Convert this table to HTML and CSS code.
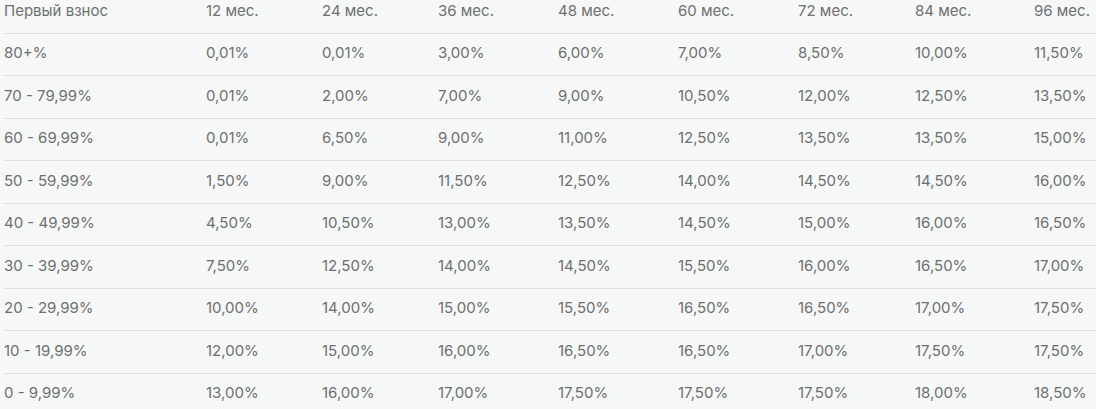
FILE: index.html
```html
<!DOCTYPE html>
<html lang="ru">
<head>
<meta charset="utf-8">
<link rel="stylesheet" href="styles.css">
</head>
<body>
<table class="rates">
  <colgroup>
    <col class="c0"><col class="c1"><col class="c2"><col class="c3"><col class="c4"><col class="c5"><col class="c6"><col class="c7"><col class="c8">
  </colgroup>
  <thead>
    <tr><th>Первый взнос</th><th>12 мес.</th><th>24 мес.</th><th>36 мес.</th><th>48 мес.</th><th>60 мес.</th><th>72 мес.</th><th>84 мес.</th><th>96 мес.</th></tr>
  </thead>
  <tbody>
    <tr><td>80+%</td><td>0,01%</td><td>0,01%</td><td>3,00%</td><td>6,00%</td><td>7,00%</td><td>8,50%</td><td>10,00%</td><td>11,50%</td></tr>
    <tr><td>70 - 79,99%</td><td>0,01%</td><td>2,00%</td><td>7,00%</td><td>9,00%</td><td>10,50%</td><td>12,00%</td><td>12,50%</td><td>13,50%</td></tr>
    <tr><td>60 - 69,99%</td><td>0,01%</td><td>6,50%</td><td>9,00%</td><td>11,00%</td><td>12,50%</td><td>13,50%</td><td>13,50%</td><td>15,00%</td></tr>
    <tr><td>50 - 59,99%</td><td>1,50%</td><td>9,00%</td><td>11,50%</td><td>12,50%</td><td>14,00%</td><td>14,50%</td><td>14,50%</td><td>16,00%</td></tr>
    <tr><td>40 - 49,99%</td><td>4,50%</td><td>10,50%</td><td>13,00%</td><td>13,50%</td><td>14,50%</td><td>15,00%</td><td>16,00%</td><td>16,50%</td></tr>
    <tr><td>30 - 39,99%</td><td>7,50%</td><td>12,50%</td><td>14,00%</td><td>14,50%</td><td>15,50%</td><td>16,00%</td><td>16,50%</td><td>17,00%</td></tr>
    <tr><td>20 - 29,99%</td><td>10,00%</td><td>14,00%</td><td>15,00%</td><td>15,50%</td><td>16,50%</td><td>16,50%</td><td>17,00%</td><td>17,50%</td></tr>
    <tr><td>10 - 19,99%</td><td>12,00%</td><td>15,00%</td><td>16,00%</td><td>16,50%</td><td>16,50%</td><td>17,00%</td><td>17,50%</td><td>17,50%</td></tr>
    <tr><td>0 - 9,99%</td><td>13,00%</td><td>16,00%</td><td>17,00%</td><td>17,50%</td><td>17,50%</td><td>17,50%</td><td>18,00%</td><td>18,50%</td></tr>
  </tbody>
</table>
</body>
</html>
```
FILE: styles.css
```css
html, body {
  margin: 0;
  padding: 0;
  background: #f6f7f7;
}
body {
  padding-left: 4px;
  overflow: hidden;
}
.rates {
  border-collapse: collapse;
  table-layout: fixed;
  width: 1092px;
  font-family: Inter, "Noto Sans", sans-serif;
  font-size: 15px;
  color: #6d7070;
}
.c0 { width: 202px; }
.c1 { width: 116px; }
.c2 { width: 116px; }
.c3 { width: 120px; }
.c4 { width: 120px; }
.c5 { width: 120px; }
.c6 { width: 117px; }
.c7 { width: 119px; }
.c8 { width: 62px; }
.rates th,
.rates td {
  padding: 0;
  text-align: left;
  font-weight: 400;
  white-space: nowrap;
  vertical-align: middle;
}
.rates thead th {
  height: 33px;
  padding-bottom: 11px;
  box-sizing: border-box;
  border-bottom: 1px solid #dddfdf;
}
.rates tbody td {
  height: 42.5px;
  padding-bottom: 3px;
  box-sizing: border-box;
  border-bottom: 1px solid #dddfdf;
}
```
